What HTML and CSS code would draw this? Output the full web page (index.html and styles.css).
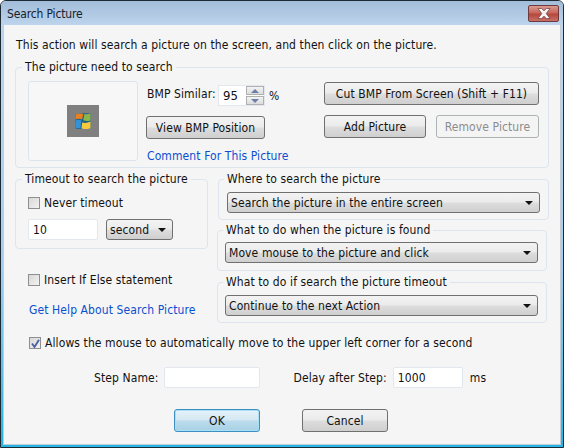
FILE: index.html
```html
<!DOCTYPE html>
<html lang="en">
<head>
    <meta charset="UTF-8">
    <meta name="viewport" content="width=device-width, initial-scale=1.0">
    <title>Search Picture</title>
    <link rel="stylesheet" href="styles.css">
</head>
<body>
    <div class="window">
        <div class="titlebar">
            <span class="title">Search Picture</span>
            <span class="close">
                <svg width="16" height="11" viewBox="0 0 16 11"><path d="M2 0.5h3.6l2.4 2.3 2.4-2.3h3.6l-3.8 5 3.8 5h-3.6l-2.4-2.3-2.4 2.3h-3.6l3.8-5z" fill="#f6f6f6" stroke="#6b3a3a" stroke-width="0.7"/></svg>
            </span>
        </div>
        <div class="client">
            <p class="intro">This action will search a picture on the screen, and then click on the picture.</p>

            <fieldset class="group group-picture">
                <legend>The picture need to search</legend>
                <div class="picture-body">
                    <div class="preview">
                        <div class="thumb">
                            <svg width="16" height="16" viewBox="0 0 16 16">
                                <path d="M0.5 1.5Q6 -0.5 15.5 0.5V15.5Q8 16.5 0.5 15.5z" fill="#1f5f86"/>
                                <path d="M0.5 1.5Q4.5 0 8.4 1L7 6.4Q3.8 5.2 0.5 6.4z" fill="#e8801f"/>
                                <path d="M9.4 1Q12.5 1.8 15.5 0.5V7.4Q11.5 8.6 8.2 7.2z" fill="#8ab64e"/>
                                <path d="M0.5 7.4Q3.6 6.2 6.4 7.4L5.4 15.4Q2.8 14.4 0.5 15.5z" fill="#3393d6"/>
                                <path d="M7.2 9.6Q11.4 10.8 15.5 8.6V15.5Q10.4 16.6 6.4 15.6z" fill="#f7c93e"/>
                            </svg>
                        </div>
                    </div>
                    <div class="picture-middle">
                        <div class="similar">
                            <label>BMP Similar:</label>
                            <div class="spinner">
                                <span class="spinner-value">95</span>
                                <span class="spinner-arrows">
                                    <span class="spin-btn"><i class="tri tri-up"></i></span>
                                    <span class="spin-btn"><i class="tri tri-down"></i></span>
                                </span>
                            </div>
                            <span>%</span>
                        </div>
                        <button class="btn btn-view">View BMP Position</button>
                        <a href="#" class="link">Comment For This Picture</a>
                    </div>
                    <div class="picture-right">
                        <button class="btn btn-cut">Cut BMP From Screen (Shift + F11)</button>
                        <div class="btn-row">
                            <button class="btn btn-half">Add Picture</button>
                            <button class="btn btn-half" disabled>Remove Picture</button>
                        </div>
                    </div>
                </div>
            </fieldset>

            <div class="columns">
                <div class="col-left">
                    <fieldset class="group group-timeout">
                        <legend>Timeout to search the picture</legend>
                        <label class="check"><i class="box"></i>Never timeout</label>
                        <div class="timeout-row">
                            <input class="field field-timeout" type="text" value="10">
                            <div class="combo combo-unit"><span>second</span><i class="tri tri-down tri-dark"></i></div>
                        </div>
                    </fieldset>
                    <label class="check check-else"><i class="box"></i>Insert If Else statement</label>
                    <a href="#" class="link link-help">Get Help About Search Picture</a>
                </div>
                <div class="col-right">
                    <fieldset class="group group-where">
                        <legend>Where to search the picture</legend>
                        <div class="combo"><span>Search the picture in the entire screen</span><i class="tri tri-down tri-dark"></i></div>
                    </fieldset>
                    <fieldset class="group group-found">
                        <legend>What to do when the picture is found</legend>
                        <div class="combo"><span>Move mouse to the picture and click</span><i class="tri tri-down tri-dark"></i></div>
                    </fieldset>
                    <fieldset class="group group-expire">
                        <legend>What to do if search the picture timeout</legend>
                        <div class="combo"><span>Continue to the next Action</span><i class="tri tri-down tri-dark"></i></div>
                    </fieldset>
                </div>
            </div>

            <label class="check check-allow">
                <i class="box box-on">
                    <svg width="9" height="9" viewBox="0 0 9 9"><path d="M1 4.5L3.5 8 8 0.8" fill="none" stroke="#4a5f9e" stroke-width="1.8"/></svg>
                </i>Allows the mouse to automatically move to the upper left corner for a second
            </label>

            <div class="step-row">
                <label>Step Name:</label>
                <input class="field field-name" type="text">
                <label class="delay-label">Delay after Step:</label>
                <input class="field field-delay" type="text" value="1000">
                <span class="ms">ms</span>
            </div>

            <div class="actions">
                <button class="btn btn-action btn-default">OK</button>
                <button class="btn btn-action">Cancel</button>
            </div>
        </div>
    </div>
</body>
</html>
```

FILE: styles.css
```css
* {
    box-sizing: border-box;
}
html, body {
    margin: 0;
    padding: 0;
}
body {
    width: 564px;
    height: 448px;
    overflow: hidden;
    background: #ffffff;
    font-family: "DejaVu Sans Condensed", "DejaVu Sans", sans-serif;
    font-stretch: condensed;
    font-size: 12px;
    line-height: 14px;
    letter-spacing: 0.1px;
    color: #111111;
}
.window {
    width: 564px;
    height: 448px;
    display: flex;
    flex-direction: column;
    background: linear-gradient(#c0d8ee 0%, #a4ceee 60%, #25b4e4 100%);
    border: 1px solid #1c2a33;
    border-radius: 6px 6px 0 0;
}
.titlebar {
    height: 24px;
    flex: none;
    display: flex;
    justify-content: space-between;
    padding: 0 4px 0 6px;
    background: linear-gradient(#a3bcd9, #bcd4ec);
    border-radius: 5px 5px 0 0;
}
.title {
    padding-top: 6px;
    letter-spacing: -0.15px;
    color: #16202b;
}
.close {
    width: 31px;
    height: 17px;
    margin-top: 4px;
    display: flex;
    align-items: center;
    justify-content: center;
    border: 1px solid #6d3a3f;
    border-radius: 2px;
    background: linear-gradient(#d99a90 0%, #c8675c 45%, #b4473c 55%, #c97066 100%);
}

.client {
    flex: 1;
    margin: 0 2px 2px 2px;
    padding: 0 11px;
    background: #f5f5f5;
    border: 1px solid #c3ccd4;
    border-top: 0;
}
.intro {
    margin: 13px 0 0 1px;
}

/* group boxes */
.group {
    margin: 0;
    padding: 0;
    min-width: 0;
    border: 1px solid #dce5ed;
    border-radius: 4px;
}
.group legend {
    margin-left: 6px;
    padding: 0 3px;
    line-height: 14px;
    color: #111111;
}
.group-picture {
    margin-top: 8px;
    height: 108px;
}
.picture-body {
    display: flex;
    padding: 7px 9px 0 12px;
}
.preview {
    width: 110px;
    height: 80px;
    flex: none;
    display: flex;
    align-items: center;
    justify-content: center;
    background: #f7f7f7;
    border: 1px solid #dce5ed;
    border-radius: 3px;
}
.thumb {
    width: 32px;
    height: 32px;
    display: flex;
    align-items: center;
    justify-content: center;
    background: #808080;
}
.picture-middle {
    width: 119px;
    flex: none;
    margin-left: 8px;
}
.similar {
    display: flex;
    align-items: center;
    height: 21px;
    margin-top: 4px;
    margin-left: 1px;
    white-space: nowrap;
}
.similar label {
    width: 71px;
    flex: none;
    padding-bottom: 4px;
}
.spinner {
    width: 47px;
    height: 21px;
    flex: none;
    margin-right: 4px;
    display: flex;
    justify-content: space-between;
    background: #ffffff;
    border: 1px solid #e2e8ee;
}
.spinner-value {
    padding: 3px 0 0 4px;
    font-size: 13px;
}
.spinner-arrows {
    width: 18px;
    display: flex;
    flex-direction: column;
    gap: 1px;
}
.spin-btn {
    flex: 1;
    display: flex;
    align-items: center;
    justify-content: center;
    background: linear-gradient(#f4f4f4, #dcdcdc);
    border: 1px solid #b0b0b0;
}
.tri {
    display: block;
    width: 0;
    height: 0;
    border-left: 4px solid transparent;
    border-right: 4px solid transparent;
}
.tri-up {
    border-bottom: 4px solid #6d7fa8;
}
.tri-down {
    border-top: 4px solid #6d7fa8;
}
.tri-dark {
    border-top-color: #111111;
}
.picture-right {
    margin-left: 59px;
    width: 215px;
    flex: none;
    padding-top: 1px;
}
.btn-row {
    display: flex;
    justify-content: space-between;
    margin-top: 10px;
}

/* buttons */
.btn {
    display: block;
    height: 23px;
    padding: 0;
    font: inherit;
    letter-spacing: inherit;
    color: #111111;
    background: linear-gradient(#f3f3f3 0%, #ebebeb 48%, #dddddd 52%, #cfcfcf 100%);
    border: 1px solid #707070;
    border-radius: 3px;
}
.btn:disabled {
    color: #8c8c8c;
    background: #f4f4f4;
    border-color: #adb2b5;
}
.btn-view {
    width: 119px;
    margin-top: 10px;
}
.btn-cut {
    width: 215px;
}
.btn-half {
    width: 102px;
}
.btn-half:disabled {
    width: 103px;
}
.link {
    display: block;
    margin: 10px 0 0 1px;
    color: #0b4fd0;
    text-decoration: none;
    white-space: nowrap;
}

/* lower columns */
.columns {
    display: grid;
    grid-template-columns: 193px 331px;
    column-gap: 10px;
    margin-top: 4px;
}
.group-timeout {
    height: 77px;
    padding: 10px 0 0 12px;
}
.group-timeout legend {
    margin-left: -6px;
}
.check {
    display: flex;
    align-items: center;
    gap: 4px;
    height: 14px;
}
.box {
    width: 12px;
    height: 12px;
    flex: none;
    display: flex;
    align-items: center;
    justify-content: center;
    background: linear-gradient(135deg, #d8d8d8, #f2f2f2);
    border: 1px solid #8e8f8f;
}
.timeout-row {
    display: flex;
    gap: 8px;
    margin-top: 9px;
}
.field {
    display: block;
    height: 21px;
    padding: 0 4px;
    font: inherit;
    letter-spacing: inherit;
    color: #111111;
    background: #ffffff;
    border: 1px solid #e2e8ee;
    border-radius: 2px;
    outline: none;
}
.field-timeout {
    width: 70px;
}
.combo {
    height: 21px;
    display: flex;
    align-items: center;
    justify-content: space-between;
    padding: 0 6px 0 3px;
    background: linear-gradient(#f3f3f3 0%, #ebebeb 48%, #dddddd 52%, #cfcfcf 100%);
    border: 1px solid #707070;
    border-radius: 3px;
}
.combo-unit {
    width: 67px;
}
.check-else {
    margin: 24px 0 0 13px;
}
.link-help {
    margin: 16px 0 0 14px;
}
.col-right {
    display: flex;
    flex-direction: column;
}
.group-where {
    height: 48px;
    padding: 6px 8px 0;
}
.group-where legend {
    margin-left: -3px;
}
.group-found {
    height: 48px;
    margin: 3px 2px 0 -1px;
    padding: 5px 8px 0 7px;
}
.group-expire {
    height: 48px;
    margin: 4px 2px 0 -1px;
    padding: 6px 8px 0 7px;
}
.group-found legend, .group-expire legend {
    margin-left: -2px;
}
.check-allow {
    margin: 13px 0 0 14px;
}

/* bottom rows */
.step-row {
    display: flex;
    align-items: center;
    margin: 17px 0 0 79px;
}
.field-name {
    width: 96px;
    margin-left: 5px;
}
.delay-label {
    margin-left: 34px;
}
.field-delay {
    width: 70px;
    margin-left: 6px;
}
.ms {
    margin-left: 7px;
}
.actions {
    display: flex;
    margin: 21px 0 0 159px;
    gap: 42px;
}
.btn-action {
    width: 86px;
}
.btn-default {
    border-color: #3c8fc0;
    box-shadow: inset 0 0 0 1px #a8e0f5;
    background: linear-gradient(#e6f3fa 0%, #d4e8f3 48%, #bcdcec 52%, #a8d0e6 100%);
}
```
